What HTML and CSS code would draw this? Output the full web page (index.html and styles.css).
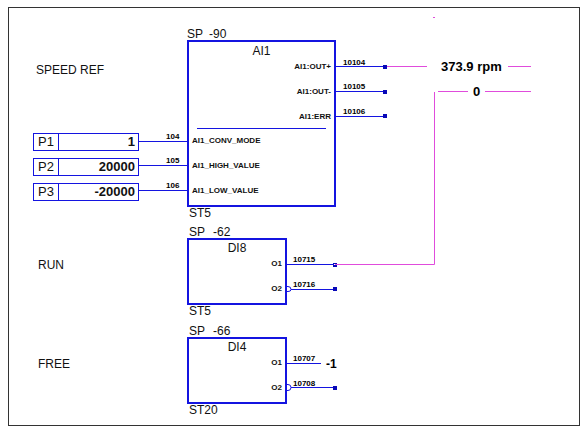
FILE: index.html
```html
<!DOCTYPE html>
<html lang="en">
<head>
<meta charset="utf-8">
<title>Speed reference function blocks</title>
<link rel="stylesheet" href="styles.css">
</head>
<body>
<main class="sheet">
  <svg class="wires" viewBox="9 8 570 417" width="570" height="417">
    <g class="wire">
      <path d="M138 141.5H187M138 165.5H187M138 190.5H187"/>
      <path d="M336 66.5H384M336 91.5H384M336 116.5H384"/>
      <path d="M286 264.5H334M291 289.5H334M286 363.5H321M291 387.5H334"/>
      <path d="M286 286.5H288Q291 286.5 291 289.5Q291 291.5 288 291.5H286"/>
      <path d="M286 384.5H288Q291 384.5 291 387.5Q291 390.5 288 390.5H286"/>
    </g>
    <g class="signal">
      <path d="M386 66.5H427M508 66.5H531M438 91.5H468M485 91.5H531"/>
      <path d="M335 264.5H434.5V92"/>
      <path d="M433 17.5H435"/>
    </g>
    <g class="pin">
      <path d="M383 65h4v4h-4zM383 90h4v4h-4zM383 114h4v4h-4z"/>
      <path d="M333 263h4v1h-4zM333 265h4v2h-4zM333 287h4v4h-4zM333 386h4v4h-4z"/>
    </g>
    <g class="number">
      <text x="166" y="139">104</text>
      <text x="166" y="163">105</text>
      <text x="166" y="188">106</text>
      <text x="343" y="65">10104</text>
      <text x="343" y="89">10105</text>
      <text x="343" y="114">10106</text>
      <text x="293" y="262">10715</text>
      <text x="293" y="287">10716</text>
      <text x="293" y="361">10707</text>
      <text x="293" y="386">10708</text>
    </g>
    <g class="reading">
      <text x="441" y="71">373.9 rpm</text>
      <text x="473" y="96">0</text>
      <text class="small" x="326" y="368">-1</text>
    </g>
  </svg>

  <h2 class="group group-speed">SPEED REF</h2>
  <h2 class="group group-run">RUN</h2>
  <h2 class="group group-free">FREE</h2>

  <dl class="params">
    <div class="param"><dt>P1</dt><dd>1</dd></div>
    <div class="param"><dt>P2</dt><dd>20000</dd></div>
    <div class="param"><dt>P3</dt><dd>-20000</dd></div>
  </dl>

  <section class="block block-ai1">
    <header class="caption"><span>SP</span><span>-90</span></header>
    <div class="box">
      <h3>AI1</h3>
      <ul class="ports outputs"><li>AI1:OUT+</li><li>AI1:OUT-</li><li>AI1:ERR</li></ul>
      <hr>
      <ul class="ports"><li>AI1_CONV_MODE</li><li>AI1_HIGH_VALUE</li><li>AI1_LOW_VALUE</li></ul>
    </div>
    <footer class="station">ST5</footer>
  </section>

  <section class="block block-di block-di8">
    <header class="caption"><span>SP</span><span>-62</span></header>
    <div class="box">
      <h3>DI8</h3>
      <ul class="ports outputs"><li>O1</li><li>O2</li></ul>
    </div>
    <footer class="station">ST5</footer>
  </section>

  <section class="block block-di block-di4">
    <header class="caption"><span>SP</span><span>-66</span></header>
    <div class="box">
      <h3>DI4</h3>
      <ul class="ports outputs"><li>O1</li><li>O2</li></ul>
    </div>
    <footer class="station">ST20</footer>
  </section>
</main>
</body>
</html>
```
FILE: styles.css
```css
:root {
  --blue: #1414e0;
  --magenta: #e04cdc;
}

* {
  box-sizing: border-box;
}

body {
  margin: 0;
  padding: 7px 2px 0 8px;
  min-height: 100vh;
  display: flex;
  background: #fff;
  color: #111;
  font: 12px/12px "Liberation Sans", Arial, sans-serif;
}

h2, h3, ul, dl, dd {
  margin: 0;
  padding: 0;
  font-size: inherit;
  font-weight: normal;
  list-style: none;
}

/* Drawing sheet: a free canvas holding the blocks and their wires */
.sheet {
  position: relative;
  flex: 1;
  border: 1px solid #333;
}

.wires {
  display: block;
}

.wire, .signal {
  fill: none;
  stroke: var(--blue);
}

.signal {
  stroke: var(--magenta);
}

.pin {
  fill: #0808b8;
}

.number {
  font-size: 8px;
  font-weight: bold;
}

.reading {
  font-size: 13px;
  font-weight: bold;
}

.small {
  font-size: 12px;
}

/* Signal group names */
.group {
  position: absolute;
  left: 29px;
}

.group-speed { left: 27px; top: 56px; }
.group-run { top: 251px; }
.group-free { top: 350px; }

/* Parameter cells */
.params {
  position: absolute;
  left: 24px;
  top: 125px;
  width: 106px;
  display: grid;
  gap: 7px;
}

.param {
  display: grid;
  grid-template-columns: 25px 1fr;
  border: 1px solid var(--blue);
  font-size: 13px;
  line-height: 16px;
}

.param dt {
  border-right: 1px solid var(--blue);
  text-align: center;
}

.param dd {
  padding-right: 3px;
  text-align: right;
  font-weight: bold;
}

/* Function blocks */
.block {
  position: absolute;
  left: 178px;
  width: 100px;
}

.block-ai1 { top: 20px; width: 149px; }
.block-di8 { top: 218px; }
.block-di4 { top: 317px; }

.caption {
  display: flex;
  gap: 6px;
}

.block-di .caption {
  padding-left: 2px;
  gap: 8px;
}

.station {
  padding-left: 2px;
}

.box {
  border: 2px solid var(--blue);
  padding: 0 3px 9px;
}

.block-ai1 .box {
  padding-top: 1px;
}

.box h3 {
  margin-bottom: 3px;
  text-align: center;
  line-height: 16px;
}

.box hr {
  margin: 6px 5px 7px;
  border: 0;
  border-top: 1px solid var(--blue);
}

.ports {
  display: grid;
  gap: 15px;
  font-size: 8px;
  font-weight: bold;
  line-height: 10px;
}

.outputs {
  text-align: right;
}
```
